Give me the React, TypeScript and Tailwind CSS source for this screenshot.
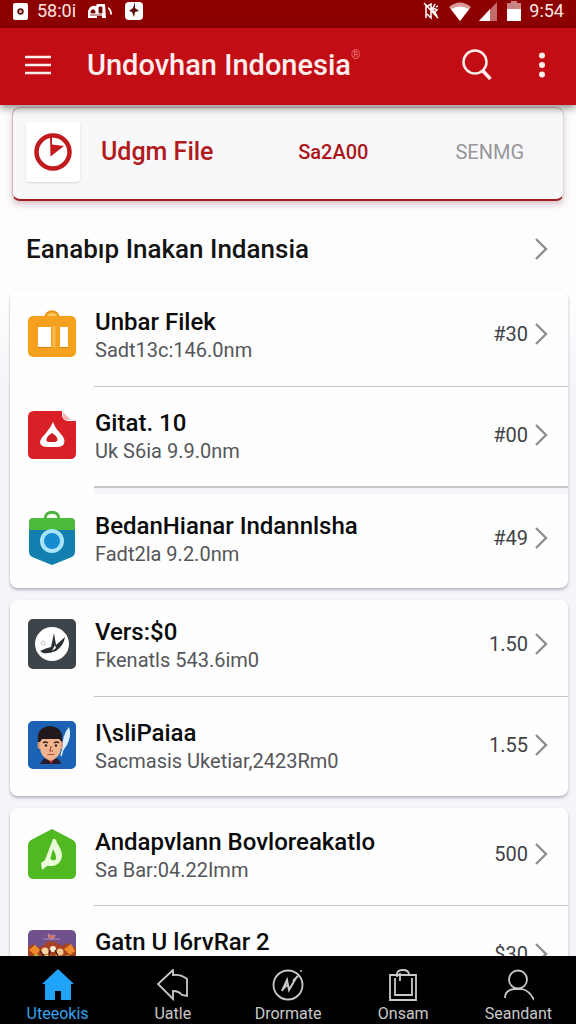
import type { ReactNode } from 'react';

const Chevron = () => (
  <svg viewBox="0 0 14 24" className="h-6 w-3.5 shrink-0" fill="none" stroke="#8e8e90" strokeWidth="2.4" aria-hidden="true">
    <path d="M2 2l10 10L2 22" />
  </svg>
);

const ClockLogo = () => (
  <svg viewBox="0 0 40 40" className="size-10" aria-hidden="true">
    <circle cx="20" cy="20" r="16.5" fill="#fff" stroke="#c01a1c" strokeWidth="4.5" />
    <path d="M17 4h2v8.500l12 1.500-13.500 10.500z" fill="#c01a1c" />
  </svg>
);

const BagIcon = () => (
  <svg viewBox="0 0 48 48" className="size-12" aria-hidden="true">
    <path d="M17 9c0-10 14-10 14 0" fill="#f7c969" stroke="#ef9a1c" strokeWidth="2.500" />
    <rect y="6" width="48" height="41" rx="5" fill="#f5a01f" />
    <rect x="10" y="17" width="13" height="20" fill="#fff" />
    <rect x="32" y="17" width="8" height="20" fill="#fff" />
    <path d="M24.500 16h3v21h-3z" fill="#f9bb4c" />
    <path d="M10 37.500h13M32 37.500h8" stroke="#d07f10" strokeWidth="1" />
  </svg>
);

const FileIcon = () => (
  <svg viewBox="0 0 48 48" className="size-12" aria-hidden="true">
    <path d="M6 0h28v5q1 5 7 5h7v32q0 6-6 6H6q-6 0-6-6V6q0-6 6-6z" fill="#d82026" />
    <path d="M35 1l8 8h-5q-3 0-3-3z" fill="#f3b6b0" />
    <path d="M25 11q2 6 7 11 6 6 4 11-2 3-7 3h-9q-8 0-8-5 0-3 6-9 5-6 7-11z" fill="#fff" />
    <path d="M24 22q4 2 5.500 6 0 3-3 3h-5q-4 0-3-3 1.500-4 5.500-6z" fill="#c91e22" />
  </svg>
);

const BadgeIcon = () => (
  <svg viewBox="0 0 48 54" className="h-[54px] w-12" aria-hidden="true">
    <path d="M17 8c0-9 14-9 14 0" fill="#f4fff2" stroke="#49b33b" strokeWidth="3" />
    <path d="M1 17h46v24q0 3-3 5l-20 8L4 46q-3-2-3-5z" fill="#137fae" />
    <path d="M5 7h38q4 0 4 4v8H1v-8q0-4 4-4z" fill="#4cba3c" />
    <circle cx="24" cy="30" r="10" fill="#168bd0" stroke="#a9e4fa" strokeWidth="4" />
  </svg>
);

const BirdIcon = () => (
  <svg viewBox="0 0 48 50" className="h-[50px] w-12" aria-hidden="true">
    <rect width="48" height="50" rx="5" fill="#3d444a" />
    <circle cx="24" cy="25" r="17" fill="#fff" />
    <path d="M12 32q6-3 11-4l3-14 2 12 9-8q-1 8-9 14-8 3-13 2z" fill="#2b3035" />
    <path d="M24 32l3-6 1 3z" fill="#fff" />
    <circle cx="15" cy="24" r="2" fill="none" stroke="#aaa" strokeWidth=".7" />
  </svg>
);

const PersonIcon = () => (
  <svg viewBox="0 0 48 48" className="size-12" aria-hidden="true">
    <rect width="48" height="48" rx="5" fill="#1b62b4" />
    <path d="M12 43q3-7 8-6h6q6 0 7 6z" fill="#251d2c" />
    <path d="M19 36l4 7 5-7z" fill="#b32832" />
    <path d="M34 31Q34 13 41 6q3 8-2 18z" fill="#dceffc" />
    <path d="M36 24l-3 11" stroke="#dceffc" strokeWidth="1.500" />
    <ellipse cx="11.500" cy="24" rx="2" ry="4" fill="#dc9876" />
    <ellipse cx="33" cy="24" rx="2" ry="4" fill="#dc9876" />
    <path d="M12 16h21v10q0 10-10.500 14Q12 36 12 26z" fill="#f2b48f" />
    <path d="M10 21Q8 6 22 5q14 1 12 16l-3-3H14l-2 3z" fill="#21191b" />
    <path d="M15 22q2-2 5 0M26 22q3-2 5 0" fill="none" stroke="#382420" strokeWidth="1.300" />
    <circle cx="18" cy="24.500" r="1.200" fill="#30201d" />
    <circle cx="28" cy="24.500" r="1.200" fill="#30201d" />
    <path d="M23 25l-1 5h3M19.500 33.500h7" fill="none" stroke="#9e4f3f" strokeWidth="1.200" />
  </svg>
);

const GreenIcon = () => (
  <svg viewBox="0 0 48 50" className="h-[50px] w-12" aria-hidden="true">
    <path d="M24 0l21 11q3 2 3 5v28q0 6-6 6H6q-6 0-6-6V16q0-3 3-5z" fill="#50b821" />
    <path d="M25 10q3-1 4 4 5 7 5 13-1 8-9 10l-6 0-5 4-1-7 4-3z" fill="#eafbd9" />
    <path d="M25 20q5 9 2 11-6 1-4-4z" fill="#50b821" />
  </svg>
);

const GameIcon = () => (
  <svg viewBox="0 0 48 48" className="size-12" aria-hidden="true">
    <rect width="48" height="48" rx="5" fill="#70518e" />
    <path d="M0 17l5-3 4 4 6-2 5-5 7 1 7 4 5-3 9 5v25q0 5-5 5H5q-5 0-5-5z" fill="#a64222" />
    <path d="M1 20l6-5 5 5-4 6zM36 19l7-5 4 7-5 4z" fill="#f08b2c" />
    <path d="M20 4l4 2 3-1-2 4-4-1zM15 9h17" fill="#e26a3f" stroke="#b98caa" />
    <circle cx="17" cy="21" r="3.500" fill="#f6d2a4" />
    <circle cx="25" cy="19" r="3" fill="#fff0d8" />
    <circle cx="32" cy="22" r="3.500" fill="#f2c990" />
    <path d="M3 27l6-3 5 5-6 5zM32 28l8-3 4 5-8 4z" fill="#a7c938" />
    <path d="M14 27l6-3 5 3 5-3 2 5-7 4-8-1z" fill="#f2d34f" />
    <path d="M12 21l4 5M27 20l3 6M22 20l-1 6" stroke="#51221b" strokeWidth="1.500" />
  </svg>
);

type RowProps = { icon: ReactNode; title: string; detail: string; price: string; pad: string };

const Row = ({ icon, title, detail, price, pad }: RowProps) => (
  <a href="#app" className={`flex items-center pr-5 pl-[18px] ${pad}`}>
    <span className="flex h-14 w-12 shrink-0 items-center justify-center">{icon}</span>
    <span className="ml-[19px] flex min-w-0 flex-1 flex-col whitespace-nowrap">
      <span className="text-2xl leading-8 font-medium text-[#0b0b0c]">{title}</span>
      <span className="text-xl leading-6 text-[#55565a]">{detail}</span>
    </span>
    <span className="mr-1.5 text-xl leading-8 text-[#414245]">{price}</span>
    <Chevron />
  </a>
);

const Divider = () => <hr className="ml-[84px] border-t border-[#c4c4ca]" />;

const first = 'pt-4 pb-6';
const second = 'pt-5 pb-[23px]';
const card = 'rounded-lg bg-[#fefefe] shadow-[0_2px_3px_rgba(60,60,80,0.35)]';

const tabs = [
  {
    label: 'Uteeokis',
    icon: <path d="M16 0l16 15h-3v16H19v-9h-6v9H3V15H0z" fill="#20a4fb" stroke="none" />,
  },
  {
    label: 'Uatle',
    icon: <path d="M16 1L1 15l15 15v-8q6 0 9 4l5 1V10q-6-5-14-4z" />,
  },
  {
    label: 'Drormate',
    icon: (
      <>
        <circle cx="16" cy="16" r="14.500" />
        <path d="M10 22l5-11 2 10 7-12M11 20l4-4M21 12l5-5" strokeWidth="2" />
        <circle cx="29" cy="2" r="1" fill="currentColor" stroke="none" />
      </>
    ),
  },
  {
    label: 'Onsam',
    icon: (
      <>
        <path d="M3 6h26v25H3zM8 9v17h17V9" />
        <path d="M10 8V5q0-4 6-4t6 5M13 4v8" />
      </>
    ),
  },
  {
    label: 'Seandant',
    icon: (
      <>
        <circle cx="16" cy="10.500" r="9" />
        <path d="M3 29q0-8 9-9h8q8 2 12 11" />
      </>
    ),
  },
];

export default function App() {
  return (
    <div className="flex h-screen flex-col overflow-hidden bg-white font-[Roboto,sans-serif]">
      <div className="flex h-7 shrink-0 items-center bg-[#8c0000] pr-2 pb-1.5 pl-[13px] text-lg text-[#ffe6e3]">
        <svg viewBox="0 0 15 17" className="h-[17px] w-[15px]" aria-hidden="true">
          <rect width="15" height="17" rx="2" fill="#fff" />
          <circle cx="7.500" cy="8.500" r="2.500" fill="#d79a96" stroke="#551010" strokeWidth="1.500" />
        </svg>
        <span className="ml-[9px] leading-[22px]">58:0i</span>
        <svg viewBox="0 0 25 16" className="ml-3 h-4 w-[25px]" fill="#fff" aria-hidden="true">
          <path d="M0 15V8q2-6 8-5l1-2h8l1 14h-4v-2H9v2z" />
          <path d="M3 8q2-3 4 0v2H3zM11 4h3v6h-3zM2 12h12" fill="#760909" stroke="#760909" strokeWidth=".8" />
          <path d="M20 4q4 2 4 8l-2-1q0-4-2-5z" />
        </svg>
        <svg viewBox="0 0 18 18" className="ml-3 size-[18px]" aria-hidden="true">
          <rect width="18" height="18" rx="4" fill="#fff" />
          <path d="M10 0v6l4 3-4 1-1 5-2-5-3-1 4-3z" fill="#5d0909" />
        </svg>
        <span className="flex-1" />
        <svg viewBox="0 0 16 18" className="h-[18px] w-4" fill="none" stroke="#fff" strokeWidth="1.500" aria-hidden="true">
          <path d="M1 1l14 15M3 3v13M3 5l5-3v14l-4-4M8 5l6 9M12 2l-2 4 4 2-3 3M15 4l-2 1" />
        </svg>
        <svg viewBox="0 0 22 19" className="ml-2.5 h-[19px] w-[22px]" aria-hidden="true">
          <path d="M0 5q11-9 22 0L11 19z" fill="#dc9b9b" />
          <path d="M2 7q9-5 18 0l-9 12z" fill="#fff" />
        </svg>
        <svg viewBox="0 0 18 19" className="ml-2 h-[19px] w-[18px]" aria-hidden="true">
          <path d="M0 19L18 0v19z" fill="#c56b6b" />
          <path d="M0 19L11 7v12z" fill="#fff" />
        </svg>
        <svg viewBox="0 0 14 20" className="ml-2.5 h-5 w-3.5" aria-hidden="true">
          <path d="M0 2h4V0h6v2h4v6H0z" fill="#c98383" />
          <path d="M0 8h14v12H0z" fill="#fff" />
        </svg>
        <span className="ml-2 mr-1 leading-[22px]">9:54</span>
      </div>

      <header className="z-10 flex h-[77px] shrink-0 items-center bg-[#c30d15] pr-[30px] pb-1 pl-[25px] text-[#ffeeec] shadow-[0_3px_8px_rgba(0,0,0,0.45)]">
        <button type="button" aria-label="Menu">
          <svg viewBox="0 0 26 20" className="h-5 w-[26px]" stroke="currentColor" strokeWidth="2.300" aria-hidden="true">
            <path d="M0 2h26M0 10h26M0 18h26" />
          </svg>
        </button>
        <div className="ml-9 flex flex-1 whitespace-nowrap">
          <h1 className="text-[29px] leading-10 font-medium">Undovhan Indonesia</h1>
          <span className="text-xs leading-5 text-[#ef7776]">®</span>
        </div>
        <button type="button" aria-label="Search">
          <svg viewBox="0 0 30 32" className="h-8 w-[30px]" fill="none" stroke="currentColor" strokeWidth="2.500" aria-hidden="true">
            <circle cx="13" cy="13" r="11.500" />
            <path d="M20.500 21.500l8 8.500" strokeWidth="3.500" />
          </svg>
        </button>
        <button type="button" aria-label="More options" className="ml-[46px]">
          <svg viewBox="0 0 8 26" className="h-[26px] w-2" fill="currentColor" aria-hidden="true">
            <circle cx="4" cy="3.500" r="3" />
            <circle cx="4" cy="13" r="3" />
            <circle cx="4" cy="22.500" r="3" />
          </svg>
        </button>
      </header>

      <main className="min-h-0 flex-1 overflow-hidden bg-[#fdfdfe]">
        <section className="mx-3 mt-0.5 flex items-center rounded-lg border border-b-2 border-[#d9b3b5] border-r-[#d8d8d8] border-b-[#a01d20] bg-[#f8f7f9] pt-3.5 pr-[39px] pb-[17px] pl-[13px] shadow-[0_4px_6px_rgba(110,40,50,0.25)]">
          <div className="flex h-[60px] w-[54px] items-center justify-center rounded-sm bg-white shadow-sm">
            <ClockLogo />
          </div>
          <h2 className="ml-[21px] text-[25px] leading-8 font-medium text-[#b01a1d]">Udgm File</h2>
          <button type="button" className="ml-auto text-xl leading-8 font-medium text-[#ab1519]">Sa2A00</button>
          <button type="button" className="ml-[87px] text-xl leading-8 text-[#97979a]">SENMG</button>
        </section>

        <a href="#all" className="flex items-center justify-between pt-8 pr-7 pb-[25px] pl-[26px]">
          <h2 className="text-[26px] leading-8 font-medium text-[#141415]">Eanabıp Inakan Indansia</h2>
          <Chevron />
        </a>

        <div className="flex flex-col gap-3 bg-gradient-to-b from-white via-[#f4f4f9] via-15% to-[#f4f4f9] pr-2 pl-2.5">
          <section className={card}>
            <Row icon={<BagIcon />} title="Unbar Filek" detail="Sadt13c:146.0nm" price="#30" pad={first} />
            <Divider />
            <Row icon={<FileIcon />} title="Gitat. 10" detail="Uk S6ia 9.9.0nm" price="#00" pad={second} />
            <div className="ml-[84px] h-2 border-t-2 border-[#c4c4ca] bg-[#f4f4f9]" />
            <Row icon={<BadgeIcon />} title="BedanHianar Indannlsha" detail="Fadt2la 9.2.0nm" price="#49" pad="pt-4 pb-[22px]" />
          </section>
          <section className={card}>
            <Row icon={<BirdIcon />} title="Vers:$0" detail="Fkenatls 543.6im0" price="1.50" pad={first} />
            <Divider />
            <Row icon={<PersonIcon />} title="I\sliPaiaa" detail="Sacmasis Uketiar,2423Rm0" price="1.55" pad={second} />
          </section>
          <section className={card}>
            <Row icon={<GreenIcon />} title="Andapvlann Bovloreakatlo" detail="Sa Bar:04.22Imm" price="500" pad="pt-[18px] pb-[23px]" />
            <Divider />
            <Row icon={<GameIcon />} title="Gatn U l6rvRar 2" detail="Sa Bar:04.22Imm" price="$30" pad={second} />
          </section>
        </div>
      </main>

      <nav className="z-10 flex h-[68px] shrink-0 bg-black">
        {tabs.map((tab, i) => (
          <a
            key={tab.label}
            href="#tab"
            className={`flex flex-1 flex-col items-center pt-[13px] ${i === 0 ? 'text-[#35a3ee]' : 'text-[#c9c9c9]'}`}
          >
            <svg viewBox="0 0 32 32" className="size-8" fill="none" stroke="currentColor" strokeWidth="1.800" aria-hidden="true">
              {tab.icon}
            </svg>
            <span className="mt-1 text-base leading-[18px]">{tab.label}</span>
          </a>
        ))}
      </nav>
    </div>
  );
}
